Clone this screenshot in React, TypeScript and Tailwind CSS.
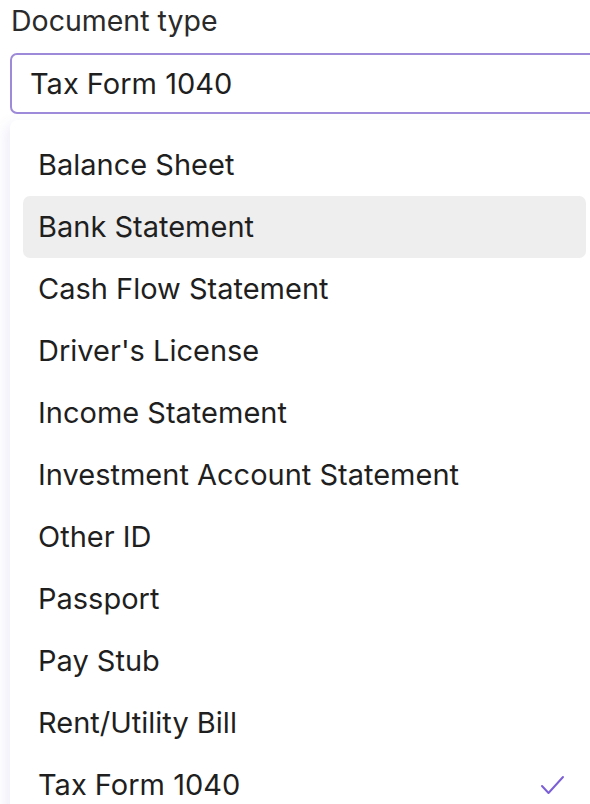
import React from "react";

const options = [
  "Balance Sheet",
  "Bank Statement",
  "Cash Flow Statement",
  "Driver's License",
  "Income Statement",
  "Investment Account Statement",
  "Other ID",
  "Passport",
  "Pay Stub",
  "Rent/Utility Bill",
  "Tax Form 1040",
];

export default function App() {
  const selected = "Tax Form 1040";
  const hovered = "Bank Statement";

  return (
    <div
      className="h-[804px] w-[590px] overflow-hidden bg-white text-[#1f1f1f]"
      style={{ fontFamily: "Inter, 'Noto Sans', sans-serif" }}
    >
      <div className="pl-[10px] pt-[4px]">
        <div className="pl-[1px] text-[28.5px] leading-[34px] text-[#2a2a2a]">Document type</div>
        <div className="mt-[15px] -mr-[20px] flex h-[61px] items-center rounded-[7px] border-2 border-[#9d8ad9] bg-white pl-[18px] text-[29px]">
          Tax Form 1040
        </div>
        <div className="mt-[6px] -mr-[20px] rounded-[8px] bg-white pt-[14px] pl-[13px] pr-[24px] shadow-[-4px_4px_14px_rgba(120,100,200,0.12)]">
          {options.map((o) => (
            <div
              key={o}
              className={
                "flex h-[62px] items-center justify-between rounded-[7px] pl-[15px] pr-[20px] text-[29px] " +
                (o === hovered ? "bg-[#eeeeee]" : "")
              }
            >
              <span>{o}</span>
              {o === selected && (
                <svg width="26" height="22" viewBox="0 0 26 22" fill="none">
                  <path
                    d="M2 12 L8.5 19 L23 3"
                    stroke="#7b5fd6"
                    strokeWidth="2"
                    strokeLinecap="round"
                    strokeLinejoin="round"
                  />
                </svg>
              )}
            </div>
          ))}
        </div>
      </div>
    </div>
  );
}
